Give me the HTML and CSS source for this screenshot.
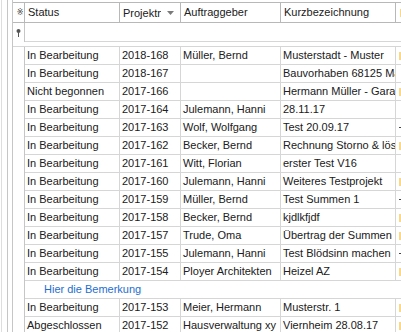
FILE: index.html
```html
<!DOCTYPE html>
<html lang="de">
<head>
    <meta charset="UTF-8">
    <meta name="viewport" content="width=device-width, initial-scale=1.0">
    <title>Projekte</title>
    <link rel="stylesheet" href="styles.css">
</head>
<body>
    <div class="frame">
        <div class="edge"></div>
        <div class="grid">
            <div class="row head">
                <div class="cell ind"><span class="star">※</span></div>
                <div class="cell">Status</div>
                <div class="cell sorted">
                    <span class="label">Projektnummer</span>
                    <svg class="sort" width="7" height="4" viewBox="0 0 7 4"><path d="M0 0H7L3.5 4Z" fill="#7a7a7a"/></svg>
                </div>
                <div class="cell">Auftraggeber</div>
                <div class="cell">Kurzbezeichnung</div>
                <div class="cell extra"><span class="mark"></span></div>
            </div>
            <div class="row filter">
                <div class="cell ind">
                    <svg width="5" height="8" viewBox="0 0 5 8"><circle cx="2.5" cy="2" r="2" fill="#555"/><path d="M2.5 3.5V8" stroke="#555" stroke-width="1"/></svg>
                </div>
                <div class="cell span"></div>
            </div>
            <div class="sep"></div>
            <div id="rows"></div>
        </div>
    </div>

    <script>
        const projects = [
            ['In Bearbeitung', '2018-168', 'Müller, Bernd', 'Musterstadt - Muster', 'y'],
            ['In Bearbeitung', '2018-167', '', 'Bauvorhaben 68125 Mannheim', ''],
            ['Nicht begonnen', '2017-166', '', 'Hermann Müller - Garage', 'y'],
            ['In Bearbeitung', '2017-164', 'Julemann, Hanni', '28.11.17', ''],
            ['In Bearbeitung', '2017-163', 'Wolf, Wolfgang', 'Test 20.09.17', 't'],
            ['In Bearbeitung', '2017-162', 'Becker, Bernd', 'Rechnung Storno & löschen', 'y'],
            ['In Bearbeitung', '2017-161', 'Witt, Florian', 'erster Test V16', ''],
            ['In Bearbeitung', '2017-160', 'Julemann, Hanni', 'Weiteres Testprojekt', 'y'],
            ['In Bearbeitung', '2017-159', 'Müller, Bernd', 'Test Summen 1', 't'],
            ['In Bearbeitung', '2017-158', 'Becker, Bernd', 'kjdlkfjdf', 'y'],
            ['In Bearbeitung', '2017-157', 'Trude, Oma', 'Übertrag der Summen', 'y'],
            ['In Bearbeitung', '2017-155', 'Julemann, Hanni', 'Test Blödsinn machen', 't'],
            ['In Bearbeitung', '2017-154', 'Ployer Architekten', 'Heizel AZ', 'y', 'Hier die Bemerkung'],
            ['In Bearbeitung', '2017-153', 'Meier, Hermann', 'Musterstr. 1', 'y'],
            ['Abgeschlossen', '2017-152', 'Hausverwaltung xy', 'Viernheim 28.08.17', 'y']
        ];

        const rows = document.getElementById('rows');

        function cell(text, cls) {
            const div = document.createElement('div');
            div.className = 'cell' + (cls ? ' ' + cls : '');
            div.textContent = text;
            return div;
        }

        projects.forEach(p => {
            const row = document.createElement('div');
            row.className = 'row';
            row.appendChild(cell('', 'ind'));
            for (let i = 0; i < 4; i++) {
                row.appendChild(cell(p[i]));
            }
            const extra = cell('', 'extra');
            if (p[4] === 'y') {
                const mark = document.createElement('span');
                mark.className = 'mark';
                extra.appendChild(mark);
            } else if (p[4] === 't') {
                const tick = document.createElement('span');
                tick.className = 'tick';
                extra.appendChild(tick);
            }
            row.appendChild(extra);
            rows.appendChild(row);

            // preview row with the remark
            if (p[5]) {
                const preview = document.createElement('div');
                preview.className = 'row preview';
                preview.appendChild(cell('', 'ind'));
                preview.appendChild(cell(p[5], 'span note'));
                rows.appendChild(preview);
            }
        });
    </script>
</body>
</html>
```

FILE: styles.css
```css
body {
    margin: 0;
    background: #fff;
    font-family: "Liberation Sans", Arial, sans-serif;
    font-size: 11px;
    color: #202020;
    overflow: hidden;
}
.frame {
    display: flex;
    height: 100vh;
}
.edge {
    box-sizing: border-box;
    width: 7px;
    margin-left: 1px;
    margin-right: 4px;
    border-left: 1px solid #dedede;
    border-right: 1px solid #c6c6c6;
}
.grid {
    flex: 1;
    padding-top: 2px;
    border-left: 1px solid #c6c6c6;
    min-width: 0;
}
.row {
    display: grid;
    grid-template-columns: 12px 95px 61px 100px 115px 1fr;
    height: 18px;
}
.cell {
    box-sizing: border-box;
    border-right: 1px solid #d6d6d6;
    border-bottom: 1px solid #d6d6d6;
    padding-left: 2px;
    line-height: 17px;
    white-space: nowrap;
    overflow: hidden;
}
.cell.ind {
    padding: 0;
    border-bottom: none;
    border-right-color: #c6c6c6;
    display: flex;
    justify-content: center;
    align-items: center;
}
.cell.extra {
    border-right: none;
}
.cell.span {
    grid-column: 2 / -1;
    border-right: none;
}
.head {
    height: 20px;
    border-top: 1px solid #b8b8b8;
}
.head .cell {
    border-color: #b8b8b8;
    line-height: 18px;
    padding-left: 3px;
}
.head .cell.ind {
    border-bottom: 1px solid #b8b8b8;
}
.star {
    font-family: "DejaVu Sans", sans-serif;
    font-size: 8px;
    color: #444;
}
.sorted {
    display: flex;
    align-items: center;
}
.sorted .label {
    flex: 1;
    overflow: hidden;
}
.sort {
    margin: 0 6px 0 6px;
    flex: none;
}
.filter {
    height: 19px;
}
.filter .cell.span {
    border-bottom: 1px solid #d6d6d6;
}
.sep {
    height: 4px;
    border-bottom: 1px solid #d6d6d6;
}
.preview .note {
    color: #1e6ecf;
    padding-left: 19px;
}
.mark {
    display: inline-block;
    width: 3px;
    height: 8px;
    margin-left: 1px;
    vertical-align: -1px;
    background: #f8d98c;
}
.tick {
    display: inline-block;
    width: 3px;
    height: 1px;
    margin-left: 1px;
    vertical-align: 3px;
    background: #444;
}
```
